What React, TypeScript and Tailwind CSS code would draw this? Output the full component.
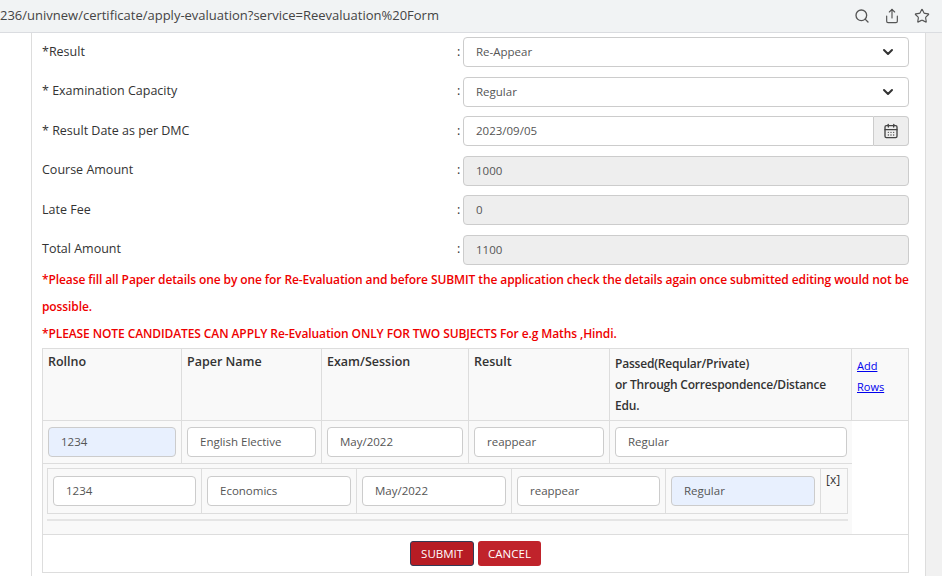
import { Search, Share, Star, ChevronDown, CalendarDays } from 'lucide-react'

const FIELDS = [
  { label: '*Result', value: 'Re-Appear', kind: 'select' },
  { label: '* Examination Capacity', value: 'Regular', kind: 'select' },
  { label: '* Result Date as per DMC', value: '2023/09/05', kind: 'date' },
  { label: 'Course Amount', value: '1000', kind: 'ro' },
  { label: 'Late Fee', value: '0', kind: 'ro' },
  { label: 'Total Amount', value: '1100', kind: 'ro' },
]

const inp = 'h-[30px] w-full rounded border border-[#ccc] px-3 flex items-center text-[11.5px] text-[#555]'

export default function App() {
  return (
    <div className="h-[576px] w-[942px] overflow-hidden bg-white text-[12.5px] text-[#333]" style={{ fontFamily: '"Open Sans", "Liberation Sans", sans-serif' }}>
      {/* url bar */}
      <div className="flex h-[33px] items-center justify-between border-b border-[#dadce0] bg-[#f1f3f4] pr-3">
        <span className="text-[13px] text-[#444]">236/univnew/certificate/apply-evaluation?service=Reevaluation%20Form</span>
        <div className="flex items-center gap-[14px] text-[#555]">
          <Search className="h-4 w-4" strokeWidth={2} />
          <Share className="h-4 w-4" strokeWidth={1.75} />
          <Star className="h-4 w-4" strokeWidth={1.75} />
        </div>
      </div>

      <div className="flex h-[543px]">
        <div className="w-[32px] shrink-0 border-r border-[#ddd]" />
        <div className="w-[893px] shrink-0 px-[10px] pt-[4px]">
          {FIELDS.map((f) => (
            <div key={f.label} className="flex h-[39.5px] items-start">
              <div className="flex h-[30px] w-[415px] items-center">{f.label}</div>
              <div className="flex h-[30px] w-[6px] items-center">:</div>
              <div className="w-[446px]">
                {f.kind === 'select' && (
                  <div className={`${inp} bg-white justify-between`}>
                    {f.value}
                    <ChevronDown className="h-4 w-4 text-[#333]" strokeWidth={3} />
                  </div>
                )}
                {f.kind === 'date' && (
                  <div className="flex h-[30px]">
                    <div className={`${inp} bg-white rounded-r-none`}>{f.value}</div>
                    <div className="flex w-[35px] shrink-0 items-center justify-center rounded-r border border-l-0 border-[#ccc] bg-[#eee]">
                      <CalendarDays className="h-4 w-4 text-[#444]" />
                    </div>
                  </div>
                )}
                {f.kind === 'ro' && <div className={`${inp} bg-[#eee]`}>{f.value}</div>}
              </div>
            </div>
          ))}

          <p className="mt-[-8px] text-[12px] font-semibold leading-[27px] tracking-[-0.1px] text-[#e00]">
            *Please fill all Paper details one by one for Re-Evaluation and before SUBMIT the application check the details again once submitted editing would not be possible.
          </p>
          <p className="text-[12px] font-semibold leading-[27px] tracking-[-0.1px] text-[#e00]">
            *PLEASE NOTE CANDIDATES CAN APPLY Re-Evaluation ONLY FOR TWO SUBJECTS For e.g Maths ,Hindi.
          </p>

          <div className="mt-[1px] w-[867px] border border-[#ddd]">
            <div className="flex border-b border-[#ddd] bg-[#f9f9f9] font-semibold">
              <div className="h-[71px] w-[139px] border-r border-[#ddd] px-[5px] py-[4px]">Rollno</div>
              <div className="w-[140px] border-r border-[#ddd] px-[5px] py-[4px]">Paper Name</div>
              <div className="w-[147px] border-r border-[#ddd] px-[5px] py-[4px]">Exam/Session</div>
              <div className="w-[141px] border-r border-[#ddd] px-[5px] py-[4px]">Result</div>
              <div className="w-[242px] border-r border-[#ddd] px-[5px] py-[4px] text-[12px] leading-[21px] tracking-[-0.2px]">
                Passed(Reqular/Private)<br />or Through Correspondence/Distance<br />Edu.
              </div>
              <div className="flex-1 px-[5px] py-[6px] text-[11px] font-normal leading-[21px] text-[#00e] underline">Add<br />Rows</div>
            </div>
            <div className="flex">
              <div className="w-[809px] bg-[#f9f9f9]">
                <div className="flex h-[43px] border-b border-[#ddd] bg-[#f9f9f9]">
                  {[['1234', 139, true], ['English Elective', 140, false], ['May/2022', 147, false], ['reappear', 141, false], ['Regular', 242, false]].map(([v, w, hl]) => (
                    <div key={v as string} className="flex items-center border-r border-[#ddd] px-[5px] last:border-r-0" style={{ width: w as number }}>
                      <div className={`${inp} ${hl ? 'bg-[#e8f0fe]' : 'bg-white'}`}>{v as string}</div>
                    </div>
                  ))}
                </div>
                <div className="px-[4px] pt-[4px]">
                  <div className="flex h-[46px] border border-[#ddd] bg-[#f9f9f9]">
                    {[['1234', 154, false], ['Economics', 155, false], ['May/2022', 155, false], ['reappear', 154, false], ['Regular', 155, true]].map(([v, w, hl]) => (
                      <div key={v as string} className="flex items-center border-r border-[#ddd] px-[5px]" style={{ width: w as number }}>
                        <div className={`${inp} ${hl ? 'bg-[#e8f0fe]' : 'bg-white'}`}>{v as string}</div>
                      </div>
                    ))}
                    <div className="flex-1 pl-[5px] pt-[2px] text-[12px]">[x]</div>
                  </div>
                  <div className="mt-[5px] h-[15px] border-t-2 border-[#e5e5e5]" />
                </div>
              </div>
              <div className="flex-1 bg-white" />
            </div>
            <div className="flex h-[38px] items-center justify-center gap-[4px] border-t border-[#ddd] bg-white">
              <button className="h-[25px] rounded-[3px] border border-[#333a55] bg-[#b71c24] px-[10px] text-[11.5px] text-white">SUBMIT</button>
              <button className="h-[25px] rounded-[3px] bg-[#c0232b] px-[10px] text-[11.5px] text-white">CANCEL</button>
            </div>
          </div>
        </div>
        <div className="flex-1 border-l border-[#ddd] bg-[#f1f1f1]" />
      </div>
    </div>
  )
}
